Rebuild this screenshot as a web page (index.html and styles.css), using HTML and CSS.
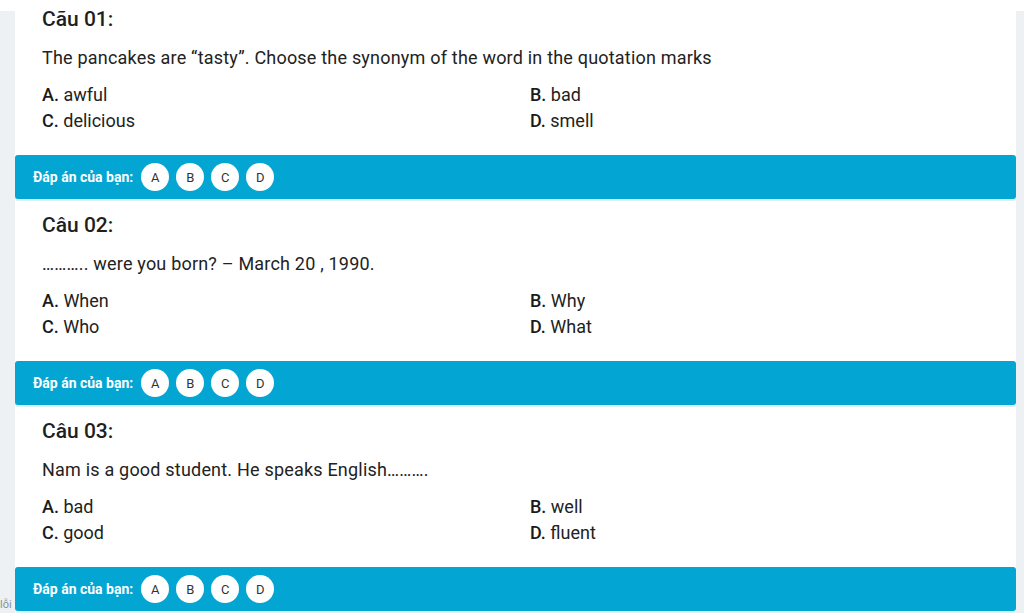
FILE: index.html
```html
<!DOCTYPE html>
<html lang="vi">
<head>
    <meta charset="UTF-8">
    <meta name="viewport" content="width=device-width, initial-scale=1.0">
    <title>Bài kiểm tra tiếng Anh</title>
    <link rel="stylesheet" href="styles.css">
</head>
<body>
    <div class="page">
        <aside class="side side-left">
            <span class="side-note">lỗi</span>
        </aside>

        <main class="quiz">
            <section class="question first">
                <div class="q-body">
                    <h3 class="q-title">Cãu 01:</h3>
                    <p class="q-text">The pancakes are “tasty”. Choose the synonym of the word in the quotation marks</p>
                    <div class="options">
                        <div class="option"><b>A.</b> awful</div>
                        <div class="option"><b>B.</b> bad</div>
                        <div class="option"><b>C.</b> delicious</div>
                        <div class="option"><b>D.</b> smell</div>
                    </div>
                </div>
                <div class="answer-bar">
                    <span class="answer-label">Đáp án của bạn:</span>
                    <button class="choice">A</button>
                    <button class="choice">B</button>
                    <button class="choice">C</button>
                    <button class="choice">D</button>
                </div>
            </section>

            <section class="question">
                <div class="q-body">
                    <h3 class="q-title">Câu 02:</h3>
                    <p class="q-text">……….. were you born? – March 20 , 1990.</p>
                    <div class="options">
                        <div class="option"><b>A.</b> When</div>
                        <div class="option"><b>B.</b> Why</div>
                        <div class="option"><b>C.</b> Who</div>
                        <div class="option"><b>D.</b> What</div>
                    </div>
                </div>
                <div class="answer-bar">
                    <span class="answer-label">Đáp án của bạn:</span>
                    <button class="choice">A</button>
                    <button class="choice">B</button>
                    <button class="choice">C</button>
                    <button class="choice">D</button>
                </div>
            </section>

            <section class="question">
                <div class="q-body">
                    <h3 class="q-title">Câu 03:</h3>
                    <p class="q-text">Nam is a good student. He speaks English……….</p>
                    <div class="options">
                        <div class="option"><b>A.</b> bad</div>
                        <div class="option"><b>B.</b> well</div>
                        <div class="option"><b>C.</b> good</div>
                        <div class="option"><b>D.</b> fluent</div>
                    </div>
                </div>
                <div class="answer-bar">
                    <span class="answer-label">Đáp án của bạn:</span>
                    <button class="choice">A</button>
                    <button class="choice">B</button>
                    <button class="choice">C</button>
                    <button class="choice">D</button>
                </div>
            </section>
        </main>

        <aside class="side side-right"></aside>
    </div>
</body>
</html>
```

FILE: styles.css
```css
body {
    margin: 0;
    background: #ffffff;
    font-family: Roboto, "Liberation Sans", Arial, sans-serif;
    color: #222;
    overflow: hidden;
}
.page {
    display: flex;
    height: 613px;
}
.side {
    background: #edf1f4;
    margin-top: 11px;
}
.side-left {
    width: 15px;
    display: flex;
    flex-direction: column;
    overflow: hidden;
}
.side-right {
    width: 8px;
}
.side-note {
    margin-top: auto;
    margin-bottom: 1px;
    font-size: 11px;
    line-height: 14px;
    color: #8a8f95;
    white-space: nowrap;
}
.quiz {
    flex: 1;
    background: #ffffff;
}
.question {
    padding-bottom: 2px;
}
.q-body {
    padding: 10px 27px 21px;
}
.question.first .q-body {
    padding-top: 5px;
}
.q-title {
    margin: 0;
    font-size: 21px;
    line-height: 28px;
    font-weight: 500;
    color: #1f1f1f;
}
.q-text {
    margin: 13px 0 0;
    font-size: 18px;
    line-height: 24px;
    letter-spacing: 0.2px;
    color: #222;
}
.options {
    margin-top: 12px;
    display: grid;
    grid-template-columns: 488px 1fr;
}
.option {
    font-size: 18px;
    line-height: 26px;
    color: #222;
}
.option b {
    font-weight: 500;
    color: #1a1a1a;
}
.answer-bar {
    display: flex;
    align-items: center;
    gap: 7px;
    height: 44px;
    padding-left: 18px;
    background: #03a5d2;
    border-radius: 3px;
    box-shadow: 0 2px 0 #dcf0f7;
}
.answer-label {
    font-size: 14px;
    font-weight: 700;
    color: #ffffff;
    margin-right: 1px;
}
.choice {
    width: 28px;
    height: 28px;
    border: none;
    border-radius: 50%;
    background: #ffffff;
    color: #333;
    font-family: Roboto, "Liberation Sans", Arial, sans-serif;
    font-size: 13px;
    padding: 0;
    cursor: pointer;
}
```
